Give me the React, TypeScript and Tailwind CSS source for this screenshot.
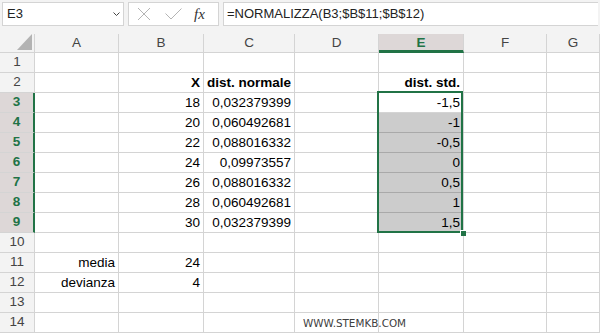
import type { ReactNode } from 'react'

const cols = ['A', 'B', 'C', 'D', 'E', 'F', 'G']
const widths = ['w-[84px]', 'w-[85px]', 'w-[91px]', 'w-[84px]', 'w-[85px]', 'w-[83px]', 'flex-1']

type Row = Partial<Record<string, string>>

const rows: Row[] = [
  {},
  { B: 'X', C: 'dist. normale', E: 'dist. std.' },
  { B: '18', C: '0,032379399', E: '-1,5' },
  { B: '20', C: '0,060492681', E: '-1' },
  { B: '22', C: '0,088016332', E: '-0,5' },
  { B: '24', C: '0,09973557', E: '0' },
  { B: '26', C: '0,088016332', E: '0,5' },
  { B: '28', C: '0,060492681', E: '1' },
  { B: '30', C: '0,032379399', E: '1,5' },
  {},
  { A: 'media', B: '24' },
  { A: 'devianza', B: '4' },
  {},
  { D: 'WWW.STEMKB.COM' },
]

const XIcon = () => (
  <svg width="14" height="14" viewBox="0 0 14 14" fill="none">
    <path d="M1 1l12 12M13 1L1 13" stroke="#b4b4b4" strokeWidth="1" />
  </svg>
)

const CheckIcon = () => (
  <svg width="17" height="12" viewBox="0 0 17 12" fill="none">
    <path d="M0.5 5.5l5.5 5.5L16.5 0.5" stroke="#b4b4b4" strokeWidth="1" />
  </svg>
)

const Chevron = () => (
  <svg width="7" height="4" viewBox="0 0 7 4" fill="none">
    <path d="M0.5 0.5l3 3 3-3" stroke="#444" strokeWidth="1" />
  </svg>
)

function Cell({ children, className }: { children?: ReactNode; className?: string }) {
  return <div className={`h-5 shrink-0 border-r border-b ${className ?? ''}`}>{children}</div>
}

export default function App() {
  return (
    <div className="relative w-[600px] h-[335px] overflow-hidden bg-white text-[13.5px] text-black" style={{ fontFamily: '"Liberation Sans", Arial, sans-serif' }}>
      {/* formula bar */}
      <div className="flex h-[34px] gap-[4px] bg-[#f3f3f3] px-[2px] pt-[2px]">
        <div className="flex h-[24px] w-[122px] items-center justify-between border border-[#d4d4d4] bg-white pl-[4px] pr-[3px] text-[13px] text-[#222]">
          <span>E3</span>
          <Chevron />
        </div>
        <div className="flex h-[24px] w-[91px] items-center border border-[#d4d4d4] bg-white pl-[8px]">
          <XIcon />
          <span className="ml-[14px]"><CheckIcon /></span>
          <span className="ml-[12px] text-[15px] italic text-[#333]" style={{ fontFamily: '"Liberation Serif", serif' }}>fx</span>
        </div>
        <div className="flex h-[24px] flex-1 items-center border border-[#d4d4d4] border-r-0 bg-white pl-[3px] text-[13px] text-[#222]">
          =NORMALIZZA(B3;$B$11;$B$12)
        </div>
      </div>

      <div className="relative">
        {/* column headers */}
        <div className="flex h-[19px] bg-[#f3f3f3] text-[#444]">
          <div className="relative h-[19px] w-[35px] shrink-0 border-r border-b border-[#d4d4d4]">
            <svg className="absolute left-[17px] top-0" width="16" height="17" viewBox="0 0 16 17">
              <path d="M15 0V16H0Z" fill="#b3b3b3" />
            </svg>
          </div>
          {cols.map((c, i) => (
            <div
              key={c}
              className={`flex h-[19px] shrink-0 items-center justify-center border-r border-[#d4d4d4] ${widths[i]} ${
                c === 'E' ? 'border-b-[3px] border-b-[#217346] bg-[#ddd7d7] pt-[2px] font-bold text-[#217346]' : 'border-b'
              }`}
            >
              {c}
            </div>
          ))}
        </div>

        {/* rows */}
        {rows.map((row, r) => {
          const n = r + 1
          const sel = n >= 3 && n <= 9
          return (
            <div key={n} className="flex">
              <Cell
                className={`flex w-[35px] items-center justify-center border-b-[#d4d4d4] ${
                  sel ? 'border-r-2 border-r-[#217346] bg-[#ddd7d7] font-bold text-[#217346]' : 'border-r-[#d4d4d4] bg-[#f3f3f3] text-[#444]'
                }`}
              >
                {n}
              </Cell>
              {cols.map((c, i) => {
                const v = row[c]
                const bold = n === 2
                const grey = c === 'E' && n >= 4 && n <= 9
                if (c === 'D' && n === 14) {
                  return (
                    <Cell key={c} className={`${widths[i]} relative border-[#d4d4d4]`}>
                      <span className="absolute left-[8px] top-[3px] whitespace-nowrap text-[10.4px] text-[#404040]" style={{ fontFamily: 'Tahoma, "DejaVu Sans", sans-serif' }}>
                        {v}
                      </span>
                    </Cell>
                  )
                }
                return (
                  <Cell
                    key={c}
                    className={`${widths[i]} flex items-center justify-end pr-[3px] leading-[19px] ${
                      grey ? 'border-r-[#d4d4d4] border-b-[#a9a9a9] bg-[#cccccc]' : 'border-[#d4d4d4]'
                    } ${bold ? 'font-bold' : ''}`}
                  >
                    {v}
                  </Cell>
                )
              })}
            </div>
          )
        })}

        {/* selection E3:E9 */}
        <div className="pointer-events-none absolute left-[377px] top-[57px] h-[142px] w-[86px] border-2 border-[#217346]" />
        <div className="pointer-events-none absolute left-[460px] top-[196px] h-[6px] w-[6px] border-l border-t border-white bg-[#217346]" />
      </div>
    </div>
  )
}
